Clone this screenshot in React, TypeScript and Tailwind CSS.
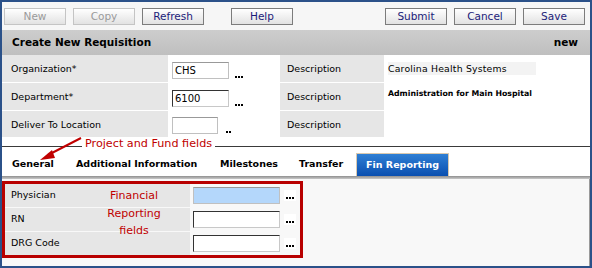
import React from "react"

const font = "font-['DejaVu_Sans','Verdana',sans-serif]"

function ToolButton({ label, disabled, focused }: { label: string; disabled?: boolean; focused?: boolean }) {
  return (
    <div
      className={`w-[62px] h-[17px] flex items-center justify-center text-[10.5px] leading-none border bg-gradient-to-b from-white to-[#e2e2e2] ${
        disabled ? "text-[#9a9a9a] border-[#c4c4c4]" : "text-[#1c1c7a] border-[#7c7c7c]"
      } ${focused ? "border-[#86d6e6]" : ""}`}
    >
      {label}
    </div>
  )
}

function Dots({ two }: { two?: boolean }) {
  return (
    <div className="w-[12px] h-[11px] bg-white flex items-end justify-center gap-[1px] pb-[2px]">
      <span className="w-[2px] h-[2px] bg-black" />
      <span className="w-[2px] h-[2px] bg-black" />
      {!two && <span className="w-[2px] h-[2px] bg-black" />}
    </div>
  )
}

function TextBox({ value, width, inset, blue }: { value?: string; width: string; inset?: boolean; blue?: boolean }) {
  return (
    <div
      className={`${width} h-[17px] border flex items-center px-[2px] text-[10px] text-black ${
        inset ? "border-[#c8c8c8] border-t-[#333] border-l-[#333]" : "border-[#c0c0c0] border-t-[#999]"
      } ${blue ? "bg-[#b4d7fb] border-[#666]" : "bg-white"}`}
    >
      {value}
    </div>
  )
}

const formRows = [
  { label: "Organization*", value: "CHS", box: "w-[57px]", desc: "Carolina Health Systems", inset: false },
  { label: "Department*", value: "6100", box: "w-[57px]", desc: "Administration for Main Hospital", inset: true },
  { label: "Deliver To Location", value: "", box: "w-[46px]", desc: "", inset: false },
]

const finRows = ["Physician", "RN", "DRG Code"]

export default function App() {
  return (
    <div className={`w-[592px] h-[268px] border-2 border-[#2b5189] bg-white flex flex-col overflow-hidden relative ${font}`}>
      {/* toolbar */}
      <div className="h-[28px] flex items-center pl-[2px] pr-[5px] bg-[#f6f6f6] pt-[1px]">
        <div className="flex gap-[7px]">
          <ToolButton label="New" disabled focused />
          <ToolButton label="Copy" disabled />
          <ToolButton label="Refresh" />
        </div>
        <div className="ml-[27px]">
          <ToolButton label="Help" />
        </div>
        <div className="ml-auto flex gap-[7px]">
          <ToolButton label="Submit" />
          <ToolButton label="Cancel" />
          <ToolButton label="Save" />
        </div>
      </div>

      {/* header */}
      <div className="h-[25px] flex items-center justify-between px-[10px] bg-gradient-to-b from-[#cdcdcd] to-[#bfbfbf] text-[10.5px] font-bold text-black">
        <span>Create New Requisition</span>
        <span className="mr-[2px]">new</span>
      </div>

      {/* form rows */}
      <div className="flex flex-col gap-[1px] text-[9.5px] text-black">
        {formRows.map((r, i) => (
          <div key={r.label} className={`flex ${i === 2 ? "h-[26px]" : "h-[27px]"}`}>
            <div className="w-[166px] bg-[#e6e6e6] flex items-center pl-[9px] pt-[2px]">{r.label}</div>
            <div className="w-[112px] bg-white flex items-center pl-[4px] gap-[4px] pt-[3px]">
              <TextBox value={r.value} width={r.box} inset={r.inset} />
              <div className="self-end mb-[2px]">
                <Dots two={i === 2} />
              </div>
            </div>
            <div className="w-[104px] bg-[#e6e6e6] flex items-center pl-[7px] pt-[2px]">Description</div>
            <div className="flex-1 bg-white pl-[4px]">
              {i === 0 && (
                <div className="mt-[7px] w-[148px] h-[13px] bg-[#f3f3f3] flex items-center text-[9.3px] tracking-[0.2px]">{r.desc}</div>
              )}
              {i === 1 && <div className="mt-[5px] text-[7.8px] font-bold">{r.desc}</div>}
            </div>
          </div>
        ))}
      </div>

      {/* divider with annotation */}
      <div className="h-[9px]" />
      <div className="border-t border-[#3a3a3a] relative">
        <div className="absolute left-[80px] top-[-10px] bg-white px-[3px] text-[11.2px] text-[#c00000] leading-[14px]">
          Project and Fund fields
        </div>
      </div>
      <svg className="absolute left-0 top-0 pointer-events-none" width="120" height="170">
        <line x1="79" y1="136" x2="46" y2="153" stroke="#c00000" strokeWidth="2" />
        <polygon points="38,158 50,148 53,156" fill="#c00000" />
      </svg>

      {/* tabs */}
      <div className="h-[29px] flex items-end text-[9.5px] font-bold text-black">
        <div className="w-[64px] pl-[10px] pb-[5px]">General</div>
        <div className="w-[144px] pl-[10px] pb-[5px]">Additional Information</div>
        <div className="w-[79px] pl-[10px] pb-[5px]">Milestones</div>
        <div className="w-[67px] pl-[10px] pb-[5px]">Transfer</div>
        <div className="w-[93px] h-[23px] flex items-center justify-center bg-gradient-to-b from-[#2f7fd4] to-[#0a4fb0] text-white border border-[#d9c9b0] border-b-0">
          Fin Reporting
        </div>
      </div>
      <div className="h-[3px] bg-gradient-to-b from-[#8f8f8f] to-[#c9c9c9]" />

      {/* content */}
      <div className="flex-1 bg-[#f8f8f8] pt-[2px] border-r border-[#9a9a9a]">
        <div className="w-[301px] h-[77px] border-[3px] border-[#b80000] flex flex-col gap-[1px] relative text-[9.5px] text-black">
          {finRows.map((label, i) => (
            <div key={label} className="h-[23px] flex">
              <div className="w-[185px] bg-[#e6e6e6] flex items-center pl-[6px]">{label}</div>
              <div className="flex-1 flex items-center pl-[3px] gap-[4px]">
                <TextBox width="w-[87px]" blue={i === 0} inset={i !== 0} />
                <Dots />
              </div>
            </div>
          ))}
          <div className="absolute left-[94px] top-[3px] w-[70px] text-center text-[11px] leading-[17.5px] text-[#c00000]">
            Financial
            <br />
            Reporting
            <br />
            fields
          </div>
        </div>
      </div>
    </div>
  )
}
